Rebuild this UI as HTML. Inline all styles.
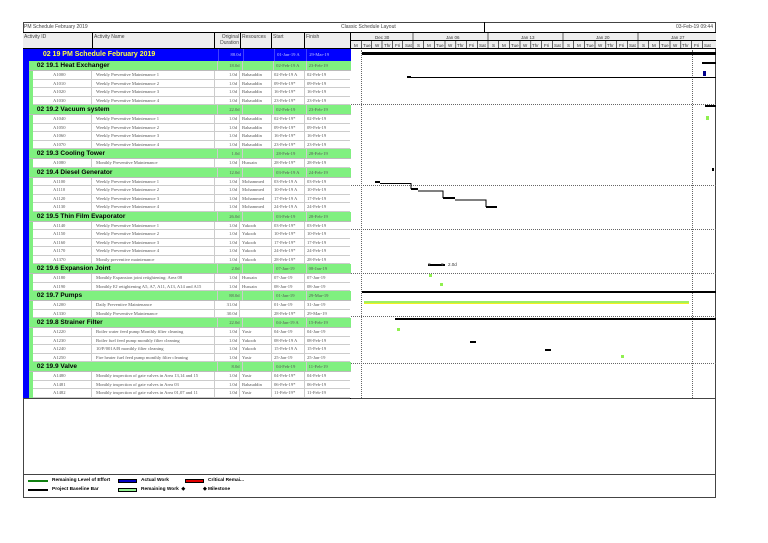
<!DOCTYPE html>
<html><head><meta charset="utf-8"><style>
*{margin:0;padding:0;box-sizing:border-box}
body{width:768px;height:543px;background:#fff;position:relative;overflow:hidden;font-family:"Liberation Sans",sans-serif}
.a{position:absolute}
.t{font-size:5px;color:#444;white-space:nowrap}
#tbl{position:absolute;left:23px;top:49px;width:328px}
.r{display:flex;height:8.5px;font-family:"Liberation Serif",serif;font-size:4.6px;color:#555;line-height:8.5px;white-space:nowrap;background:#fff}
.r div{border-right:1px solid #ccc;border-bottom:1px solid #ccc;overflow:hidden;padding:0 2px}
.r .st{width:6px;background:#0000ff;padding:0;border:0}
.r .gs{width:4px;background:#80f080;padding:0;border:0}
.r .c1{width:59px;padding-left:20px}
.r .c2{width:123px;padding-left:4px}
.r .c3{width:25px;text-align:right}
.r .c4{width:32px}
.r .c5{width:33px}
.r .c6{width:45px;border-right:0}
.w{height:10px;line-height:10px;background:#80f080}
.w div{border-bottom:1px solid #bbb}
.w .nm{width:192px;font-family:"Liberation Sans",sans-serif;font-weight:bold;font-size:6.5px;color:#000;padding-left:8px;border-right:1px solid #ccc}
.b{height:12px;line-height:12px;background:#0000ff;color:#ffff40}
.b .nm{width:196px;font-family:"Liberation Sans",sans-serif;font-weight:bold;font-size:7px;color:#ffff40 !important;padding-left:14px}
.b div{border-right:1px solid #4040ff;border-bottom:0}
.b .c3,.b .c5,.b .c6{color:#c0c0ff}
.dl{position:absolute;border-top:1px dotted #666;height:0}
.vl{position:absolute;border-left:1px dotted #666;width:0}
.k{position:absolute;background:#000}
</style></head><body>
<div class="a" style="left:23px;top:22px;width:693px;height:377px;border:1px solid #444"></div>
<div class="a" style="left:23px;top:22px;width:693px;height:11px;border-bottom:1px solid #000"></div>
<div class="a" style="left:484px;top:22px;width:1px;height:11px;background:#000"></div>
<div class="a t" style="left:24px;top:24px">PM Schedule February 2019</div>
<div class="a t" style="left:341px;top:24px">Classic Schedule Layout</div>
<div class="a t" style="left:676px;top:24px">03-Feb-19 09:44</div>
<div class="a" style="left:23px;top:33px;width:328px;height:16px;background:#eee;border-bottom:1px solid #000"></div>
<div class="a" style="left:92px;top:33px;width:1px;height:16px;background:#000"></div>
<div class="a" style="left:214px;top:33px;width:1px;height:16px;background:#000"></div>
<div class="a" style="left:240px;top:33px;width:1px;height:16px;background:#000"></div>
<div class="a" style="left:271px;top:33px;width:1px;height:16px;background:#000"></div>
<div class="a" style="left:304px;top:33px;width:1px;height:16px;background:#000"></div>
<div class="a" style="left:350px;top:33px;width:1px;height:366px;background:#000"></div>
<div class="a t" style="left:24px;top:34px">Activity ID</div>
<div class="a t" style="left:94px;top:34px">Activity Name</div>
<div class="a t" style="left:218px;top:34px;text-align:right;width:21px">Original<br>Duration</div>
<div class="a t" style="left:242px;top:34px">Resources</div>
<div class="a t" style="left:273px;top:34px">Start</div>
<div class="a t" style="left:306px;top:34px">Finish</div>
<div class="a" style="left:351px;top:33px;width:365px;height:16px;background:#eee;border-bottom:1px solid #000"></div>
<div class="a" style="left:351px;top:40px;width:365px;height:1px;background:#000"></div>
<svg class="a" style="left:351px;top:33px" width="365" height="16">
<g stroke="#000" stroke-width="0.6">
<line x1="62" y1="0" x2="62" y2="16"/><line x1="137" y1="0" x2="137" y2="16"/><line x1="212" y1="0" x2="212" y2="16"/><line x1="287" y1="0" x2="287" y2="16"/>
<line x1="10.3" y1="8" x2="10.3" y2="16"/><line x1="20.6" y1="8" x2="20.6" y2="16"/><line x1="31" y1="8" x2="31" y2="16"/><line x1="41.3" y1="8" x2="41.3" y2="16"/><line x1="51.6" y1="8" x2="51.6" y2="16"/>
<line x1="72.7" y1="8" x2="72.7" y2="16"/><line x1="83.4" y1="8" x2="83.4" y2="16"/><line x1="94" y1="8" x2="94" y2="16"/><line x1="104.8" y1="8" x2="104.8" y2="16"/><line x1="115.5" y1="8" x2="115.5" y2="16"/><line x1="126.3" y1="8" x2="126.3" y2="16"/>
<line x1="147.7" y1="8" x2="147.7" y2="16"/><line x1="158.4" y1="8" x2="158.4" y2="16"/><line x1="169" y1="8" x2="169" y2="16"/><line x1="179.8" y1="8" x2="179.8" y2="16"/><line x1="190.5" y1="8" x2="190.5" y2="16"/><line x1="201.3" y1="8" x2="201.3" y2="16"/>
<line x1="222.7" y1="8" x2="222.7" y2="16"/><line x1="233.4" y1="8" x2="233.4" y2="16"/><line x1="244" y1="8" x2="244" y2="16"/><line x1="254.8" y1="8" x2="254.8" y2="16"/><line x1="265.5" y1="8" x2="265.5" y2="16"/><line x1="276.3" y1="8" x2="276.3" y2="16"/>
<line x1="297.7" y1="8" x2="297.7" y2="16"/><line x1="308.4" y1="8" x2="308.4" y2="16"/><line x1="319" y1="8" x2="319" y2="16"/><line x1="329.8" y1="8" x2="329.8" y2="16"/><line x1="340.5" y1="8" x2="340.5" y2="16"/><line x1="351.3" y1="8" x2="351.3" y2="16"/>
</g>
<g font-family="Liberation Sans" font-size="4.5" fill="#333">
<text x="24" y="6">Dec 30</text><text x="95" y="6">Jan 06</text><text x="170" y="6">Jan 13</text><text x="245" y="6">Jan 20</text><text x="320" y="6">Jan 27</text>
<text x="3" y="14">M</text><text x="12" y="14">Tue</text><text x="24" y="14">W</text><text x="33" y="14">Thr</text><text x="44" y="14">Fri</text><text x="54" y="14">Sat</text>
<text x="66" y="14">S</text><text x="76" y="14">M</text><text x="85" y="14">Tue</text><text x="97" y="14">W</text><text x="106" y="14">Thr</text><text x="118" y="14">Fri</text><text x="128" y="14">Sat</text>
<text x="141" y="14">S</text><text x="151" y="14">M</text><text x="160" y="14">Tue</text><text x="172" y="14">W</text><text x="181" y="14">Thr</text><text x="193" y="14">Fri</text><text x="203" y="14">Sat</text>
<text x="216" y="14">S</text><text x="226" y="14">M</text><text x="235" y="14">Tue</text><text x="247" y="14">W</text><text x="256" y="14">Thr</text><text x="268" y="14">Fri</text><text x="278" y="14">Sat</text>
<text x="291" y="14">S</text><text x="301" y="14">M</text><text x="310" y="14">Tue</text><text x="322" y="14">W</text><text x="331" y="14">Thr</text><text x="343" y="14">Fri</text><text x="353" y="14">Sat</text>
</g></svg>

<div id="tbl">
<div class="r b"><div class="st"></div><div class="nm">02 19 PM Schedule February 2019</div><div class="c3">88.0d</div><div class="c4"></div><div class="c5">01-Jan-19 A</div><div class="c6">29-Mar-19</div></div>

<div class="r w"><div class="st"></div><div class="nm">02 19.1 Heat Exchanger</div><div class="c3">18.0d</div><div class="c4"></div><div class="c5">02-Feb-19 A</div><div class="c6">23-Feb-19</div></div>
<div class="r"><div class="st"></div><div class="gs"></div><div class="c1">A1000</div><div class="c2">Weekly Preventive Maintenance 1</div><div class="c3">1.0d</div><div class="c4">Bahauddin</div><div class="c5">02-Feb-19 A</div><div class="c6">02-Feb-19</div></div>
<div class="r"><div class="st"></div><div class="gs"></div><div class="c1">A1010</div><div class="c2">Weekly Preventive Maintenance 2</div><div class="c3">1.0d</div><div class="c4">Bahauddin</div><div class="c5">09-Feb-19*</div><div class="c6">09-Feb-19</div></div>
<div class="r"><div class="st"></div><div class="gs"></div><div class="c1">A1020</div><div class="c2">Weekly Preventive Maintenance 3</div><div class="c3">1.0d</div><div class="c4">Bahauddin</div><div class="c5">16-Feb-19*</div><div class="c6">16-Feb-19</div></div>
<div class="r"><div class="st"></div><div class="gs"></div><div class="c1">A1030</div><div class="c2">Weekly Preventive Maintenance 4</div><div class="c3">1.0d</div><div class="c4">Bahauddin</div><div class="c5">23-Feb-19*</div><div class="c6">23-Feb-19</div></div>

<div class="r w"><div class="st"></div><div class="nm">02 19.2 Vacuum system</div><div class="c3">22.0d</div><div class="c4"></div><div class="c5">02-Feb-19</div><div class="c6">23-Feb-19</div></div>
<div class="r"><div class="st"></div><div class="gs"></div><div class="c1">A1040</div><div class="c2">Weekly Preventive Maintenance 1</div><div class="c3">1.0d</div><div class="c4">Bahauddin</div><div class="c5">02-Feb-19*</div><div class="c6">02-Feb-19</div></div>
<div class="r"><div class="st"></div><div class="gs"></div><div class="c1">A1050</div><div class="c2">Weekly Preventive Maintenance 2</div><div class="c3">1.0d</div><div class="c4">Bahauddin</div><div class="c5">09-Feb-19*</div><div class="c6">09-Feb-19</div></div>
<div class="r"><div class="st"></div><div class="gs"></div><div class="c1">A1060</div><div class="c2">Weekly Preventive Maintenance 3</div><div class="c3">1.0d</div><div class="c4">Bahauddin</div><div class="c5">16-Feb-19*</div><div class="c6">16-Feb-19</div></div>
<div class="r"><div class="st"></div><div class="gs"></div><div class="c1">A1070</div><div class="c2">Weekly Preventive Maintenance 4</div><div class="c3">1.0d</div><div class="c4">Bahauddin</div><div class="c5">23-Feb-19*</div><div class="c6">23-Feb-19</div></div>

<div class="r w"><div class="st"></div><div class="nm">02 19.3 Cooling Tower</div><div class="c3">1.0d</div><div class="c4"></div><div class="c5">28-Feb-19</div><div class="c6">28-Feb-19</div></div>
<div class="r"><div class="st"></div><div class="gs"></div><div class="c1">A1080</div><div class="c2">Monthly Preventive Maintenance</div><div class="c3">1.0d</div><div class="c4">Hussain</div><div class="c5">28-Feb-19*</div><div class="c6">28-Feb-19</div></div>

<div class="r w"><div class="st"></div><div class="nm">02 19.4 Diesel Generator</div><div class="c3">12.0d</div><div class="c4"></div><div class="c5">03-Feb-19 A</div><div class="c6">24-Feb-19</div></div>
<div class="r"><div class="st"></div><div class="gs"></div><div class="c1">A1100</div><div class="c2">Weekly Preventive Maintenance 1</div><div class="c3">1.0d</div><div class="c4">Mohammed</div><div class="c5">03-Feb-19 A</div><div class="c6">03-Feb-19</div></div>
<div class="r"><div class="st"></div><div class="gs"></div><div class="c1">A1110</div><div class="c2">Weekly Preventive Maintenance 2</div><div class="c3">1.0d</div><div class="c4">Mohammed</div><div class="c5">10-Feb-19 A</div><div class="c6">10-Feb-19</div></div>
<div class="r"><div class="st"></div><div class="gs"></div><div class="c1">A1120</div><div class="c2">Weekly Preventive Maintenance 3</div><div class="c3">1.0d</div><div class="c4">Mohammed</div><div class="c5">17-Feb-19 A</div><div class="c6">17-Feb-19</div></div>
<div class="r"><div class="st"></div><div class="gs"></div><div class="c1">A1130</div><div class="c2">Weekly Preventive Maintenance 4</div><div class="c3">1.0d</div><div class="c4">Mohammed</div><div class="c5">24-Feb-19 A</div><div class="c6">24-Feb-19</div></div>

<div class="r w"><div class="st"></div><div class="nm">02 19.5 Thin Film Evaporator</div><div class="c3">26.0d</div><div class="c4"></div><div class="c5">03-Feb-19</div><div class="c6">28-Feb-19</div></div>
<div class="r"><div class="st"></div><div class="gs"></div><div class="c1">A1140</div><div class="c2">Weekly Preventive Maintenance 1</div><div class="c3">1.0d</div><div class="c4">Yakoob</div><div class="c5">03-Feb-19*</div><div class="c6">03-Feb-19</div></div>
<div class="r"><div class="st"></div><div class="gs"></div><div class="c1">A1150</div><div class="c2">Weekly Preventive Maintenance 2</div><div class="c3">1.0d</div><div class="c4">Yakoob</div><div class="c5">10-Feb-19*</div><div class="c6">10-Feb-19</div></div>
<div class="r"><div class="st"></div><div class="gs"></div><div class="c1">A1160</div><div class="c2">Weekly Preventive Maintenance 3</div><div class="c3">1.0d</div><div class="c4">Yakoob</div><div class="c5">17-Feb-19*</div><div class="c6">17-Feb-19</div></div>
<div class="r"><div class="st"></div><div class="gs"></div><div class="c1">A1170</div><div class="c2">Weekly Preventive Maintenance 4</div><div class="c3">1.0d</div><div class="c4">Yakoob</div><div class="c5">24-Feb-19*</div><div class="c6">24-Feb-19</div></div>
<div class="r"><div class="st"></div><div class="gs"></div><div class="c1">A1370</div><div class="c2">Montly preventive maintenance</div><div class="c3">1.0d</div><div class="c4">Yakoob</div><div class="c5">28-Feb-19*</div><div class="c6">28-Feb-19</div></div>

<div class="r w"><div class="st"></div><div class="nm">02 19.6 Expansion Joint</div><div class="c3">2.0d</div><div class="c4"></div><div class="c5">07-Jan-19</div><div class="c6">08-Jan-19</div></div>
<div class="r"><div class="st"></div><div class="gs"></div><div class="c1">A1180</div><div class="c2">Monthly Expansion joint retightening: Area 08</div><div class="c3">1.0d</div><div class="c4">Hussain</div><div class="c5">07-Jan-19</div><div class="c6">07-Jan-19</div></div>
<div class="r"><div class="st"></div><div class="gs"></div><div class="c1">A1190</div><div class="c2">Monthly EJ retightening A5, A7, A11, A13, A14 and A15</div><div class="c3">1.0d</div><div class="c4">Hussain</div><div class="c5">08-Jan-19</div><div class="c6">08-Jan-19</div></div>

<div class="r w"><div class="st"></div><div class="nm">02 19.7 Pumps</div><div class="c3">88.0d</div><div class="c4"></div><div class="c5">01-Jan-19</div><div class="c6">29-Mar-19</div></div>
<div class="r"><div class="st"></div><div class="gs"></div><div class="c1">A1200</div><div class="c2">Daily Preventive Maintenance</div><div class="c3">31.0d</div><div class="c4"></div><div class="c5">01-Jan-19</div><div class="c6">31-Jan-19</div></div>
<div class="r"><div class="st"></div><div class="gs"></div><div class="c1">A1330</div><div class="c2">Monthly Preventive Maintenance</div><div class="c3">30.0d</div><div class="c4"></div><div class="c5">28-Feb-19*</div><div class="c6">29-Mar-19</div></div>

<div class="r w"><div class="st"></div><div class="nm">02 19.8 Strainer Filter</div><div class="c3">22.0d</div><div class="c4"></div><div class="c5">04-Jan-19 A</div><div class="c6">15-Feb-19</div></div>
<div class="r"><div class="st"></div><div class="gs"></div><div class="c1">A1220</div><div class="c2">Boiler water feed pump Monthly filter cleaning</div><div class="c3">1.0d</div><div class="c4">Yasir</div><div class="c5">04-Jan-19</div><div class="c6">04-Jan-19</div></div>
<div class="r"><div class="st"></div><div class="gs"></div><div class="c1">A1230</div><div class="c2">Boiler fuel feed pump monthly filter cleaning</div><div class="c3">1.0d</div><div class="c4">Yakoob</div><div class="c5">08-Feb-19 A</div><div class="c6">08-Feb-19</div></div>
<div class="r"><div class="st"></div><div class="gs"></div><div class="c1">A1240</div><div class="c2">10/P/001A/B monthly filter cleaning</div><div class="c3">1.0d</div><div class="c4">Yakoob</div><div class="c5">15-Feb-19 A</div><div class="c6">15-Feb-19</div></div>
<div class="r"><div class="st"></div><div class="gs"></div><div class="c1">A1250</div><div class="c2">Fire heater fuel feed pump monthly filter cleaning</div><div class="c3">1.0d</div><div class="c4">Yasir</div><div class="c5">25-Jan-19</div><div class="c6">25-Jan-19</div></div>

<div class="r w"><div class="st"></div><div class="nm">02 19.9 Valve</div><div class="c3">8.0d</div><div class="c4"></div><div class="c5">04-Feb-19</div><div class="c6">11-Feb-19</div></div>
<div class="r"><div class="st"></div><div class="gs"></div><div class="c1">A1480</div><div class="c2">Monthly inspection of gate valves in Area 13,14 and 15</div><div class="c3">1.0d</div><div class="c4">Yasir</div><div class="c5">04-Feb-19*</div><div class="c6">04-Feb-19</div></div>
<div class="r"><div class="st"></div><div class="gs"></div><div class="c1">A1481</div><div class="c2">Monthly inspection of gate valves in Area 03</div><div class="c3">1.0d</div><div class="c4">Bahauddin</div><div class="c5">06-Feb-19*</div><div class="c6">06-Feb-19</div></div>
<div class="r"><div class="st"></div><div class="gs"></div><div class="c1">A1482</div><div class="c2">Monthly inspection of gate valves in Area 01,07 and 11</div><div class="c3">1.0d</div><div class="c4">Yasir</div><div class="c5">11-Feb-19*</div><div class="c6">11-Feb-19</div></div>
</div>

<div class="vl" style="left:361px;top:50px;height:348px"></div>
<div class="vl" style="left:692px;top:50px;height:348px"></div>
<div class="dl" style="left:351px;top:104px;width:365px"></div>
<div class="dl" style="left:351px;top:185px;width:365px"></div>
<div class="dl" style="left:351px;top:229px;width:365px"></div>
<div class="dl" style="left:351px;top:273px;width:365px"></div>
<div class="dl" style="left:351px;top:316px;width:365px"></div>
<div class="dl" style="left:351px;top:363px;width:365px"></div>

<div class="k" style="left:362px;top:52px;width:354px;height:3px"></div>
<div class="k" style="left:702px;top:62px;width:14px;height:2px"></div>
<div class="a" style="left:703px;top:71px;width:3px;height:5px;background:#00008b"></div>
<div class="k" style="left:407px;top:76px;width:4px;height:2px"></div>
<div class="k" style="left:411px;top:77px;width:305px;height:1px"></div>
<div class="k" style="left:705px;top:105px;width:11px;height:2px"></div>
<div class="a" style="left:706px;top:116px;width:3px;height:4px;background:#90f050"></div>
<div class="k" style="left:712px;top:168px;width:2px;height:3px"></div>
<svg class="a" style="left:370px;top:178px" width="140" height="34">
<path d="M5 4H10M10 5.5H41V10.5H48M48 13H73V19.5H85M85 22H116V28.5H127" stroke="#000" stroke-width="1" fill="none"/>
<path d="M5 4H10M41 11H48M73 20H85M116 29H127" stroke="#000" stroke-width="2" fill="none"/>
</svg>
<div class="k" style="left:428px;top:264px;width:17px;height:1.5px"></div>
<div class="a t" style="left:428px;top:262px;font-size:5px">▾</div>
<div class="a t" style="left:441px;top:262px;font-size:5px">▾</div>
<div class="a t" style="left:448px;top:262px;font-size:4.5px;color:#333">2.0d</div>
<div class="a" style="left:429px;top:274px;width:3px;height:3px;background:#90f050"></div>
<div class="a" style="left:440px;top:283px;width:3px;height:3px;background:#90f050"></div>
<div class="k" style="left:362px;top:291px;width:354px;height:2px"></div>
<div class="a" style="left:364px;top:301px;width:325px;height:3px;background:#a0f060;border-bottom:1px solid #f0f020"></div>
<div class="k" style="left:395px;top:318px;width:321px;height:2px"></div>
<div class="a" style="left:397px;top:328px;width:3px;height:3px;background:#90f050"></div>
<div class="k" style="left:470px;top:341px;width:6px;height:1.5px"></div>
<div class="k" style="left:545px;top:349px;width:6px;height:1.5px"></div>
<div class="a" style="left:621px;top:355px;width:3px;height:3px;background:#90f050"></div>

<div class="a" style="left:23px;top:398px;width:693px;height:100px;border:1px solid #444;border-top:none"></div>
<div class="a" style="left:23px;top:474px;width:693px;height:1px;background:#444"></div>
<div class="a" style="left:28px;top:480px;width:20px;height:2px;background:#108010"></div>
<div class="a" style="left:28px;top:489px;width:20px;height:1.5px;background:#000"></div>
<div class="a" style="left:118px;top:479px;width:19px;height:4px;background:#0000c0;border:0.5px solid #000"></div>
<div class="a" style="left:118px;top:488px;width:19px;height:4px;background:#90f090;border:0.5px solid #000"></div>
<div class="a" style="left:185px;top:479px;width:19px;height:4px;background:#e00000;border:0.5px solid #000"></div>
<div class="a" style="left:52px;top:478px;font-size:4.8px;font-weight:bold">Remaining Level of Effort</div>
<div class="a" style="left:52px;top:487px;font-size:4.8px;font-weight:bold">Project Baseline Bar</div>
<div class="a" style="left:141px;top:478px;font-size:4.8px;font-weight:bold">Actual Work</div>
<div class="a" style="left:141px;top:487px;font-size:4.8px;font-weight:bold">Remaining Work &nbsp;◆</div>
<div class="a" style="left:208px;top:478px;font-size:4.8px;font-weight:bold">Critical Remai...</div>
<div class="a" style="left:203px;top:487px;font-size:4.8px;font-weight:bold">◆ Milestone</div>
</body></html>
